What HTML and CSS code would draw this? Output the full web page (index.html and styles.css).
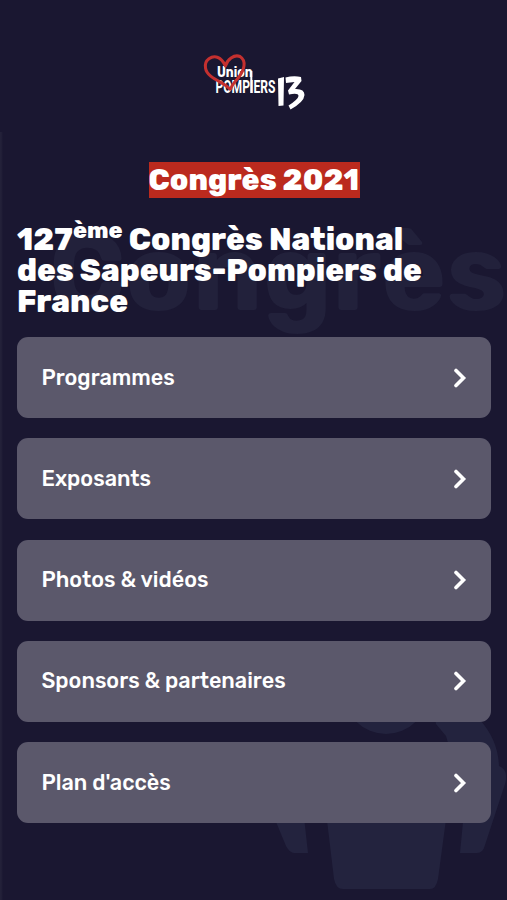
FILE: index.html
```html
<!DOCTYPE html>
<html lang="fr">

<head>
    <meta charset="UTF-8" />
    <meta name="viewport" content="width=device-width, initial-scale=1" />
    <title>Congrès 2021 – Union Pompiers 13</title>
    <link rel="stylesheet" href="styles.css">
</head>

<body>
    <header class="header">
        <svg class="logo" viewBox="0 0 104 60" role="img" aria-label="Union Pompiers 13">
            <text class="logo-union" x="15" y="26" textLength="35.500" lengthAdjust="spacingAndGlyphs">Union</text>
            <text class="logo-pompiers" transform="translate(13.500 42.200) scale(1 1.600)" textLength="60" lengthAdjust="spacingAndGlyphs">POMPIERS</text>
            <path class="logo-bar" d="M49.300 20v22" />
            <path class="logo-heart" d="M28.500 39C25 32 5 28 3.500 17C2 9 10 4 16 6.500C20 8 22 12 23.500 15C25 9 32 3 38 5.500C45 10 42 19 37 26C33 31 29 34 28.500 39" />
            <path class="logo-13" d="M76 27.500l6-1.500l-.5 28.500l-5 .5zM83.500 26.500q8-2 15.500-.5l.5 4l-6.500 8q9.500-.5 9.500 6q-.5 7-14 14.500l-2-4q9.500-6 10-9.500q0-3.500-9.500-1.500l-1-4l6.500-8.500l-8.500 1z" />
        </svg>
    </header>

    <main class="page">
        <span class="ghost" aria-hidden="true">Congrès</span>
        <svg class="firefighter" viewBox="0 0 240 230" aria-hidden="true">
            <circle cx="120" cy="30" r="42" />
            <path d="M170 62q-4-20 12-30h12q10 16 20 26q18 20 19 46q10 4 6 18l-20 61q-2 8-8 8h-17l5-52l-19-65z" />
            <path d="M60 150H181L172 217q-2 10-8 10H77q-7 0-9-10z" />
            <path d="M8 155l12 29q4 7 8 7h14l-4-36z" />
        </svg>

        <p class="badge-row"><span class="badge">Congrès 2021</span></p>
        <h1 class="title">
            <span class="line">127<sup>ème</sup> Congrès National</span>
            <span class="line">des Sapeurs-Pompiers de</span>
            <span class="line">France</span>
        </h1>

        <nav class="menu">
            <a class="item" href="#">
                <span class="label">Programmes</span>
                <svg class="chevron" viewBox="0 0 14 20"><path d="M3 2.500L10.500 10L3 17.500" /></svg>
            </a>
            <a class="item" href="#">
                <span class="label">Exposants</span>
                <svg class="chevron" viewBox="0 0 14 20"><path d="M3 2.500L10.500 10L3 17.500" /></svg>
            </a>
            <a class="item" href="#">
                <span class="label">Photos &amp; vidéos</span>
                <svg class="chevron" viewBox="0 0 14 20"><path d="M3 2.500L10.500 10L3 17.500" /></svg>
            </a>
            <a class="item" href="#">
                <span class="label">Sponsors &amp; partenaires</span>
                <svg class="chevron" viewBox="0 0 14 20"><path d="M3 2.500L10.500 10L3 17.500" /></svg>
            </a>
            <a class="item" href="#">
                <span class="label">Plan d'accès</span>
                <svg class="chevron" viewBox="0 0 14 20"><path d="M3 2.500L10.500 10L3 17.500" /></svg>
            </a>
        </nav>
    </main>
</body>

</html>
```
FILE: styles.css
```css
* {
    box-sizing: border-box;
}

body {
    margin: 0;
    height: 900px;
    overflow: hidden;
    background: #1a1731;
    color: #fff;
    font-family: Rubik, Inter, sans-serif;
}

.header {
    display: flex;
    justify-content: center;
    height: 132px;
    padding-top: 51px;
}

.logo {
    width: 104px;
    height: 60px;
}

.logo text {
    fill: #fff;
}

.logo-union {
    font: 700 14px Rubik, Inter, sans-serif;
}

.logo-pompiers {
    font: 700 12px Roboto, sans-serif;
}

.logo-bar {
    stroke: #fff;
    stroke-width: 2;
}

.logo-heart {
    fill: none;
    stroke: #c4302f;
    stroke-width: 3;
    stroke-linejoin: round;
}

.logo-13 {
    fill: #fff;
}

.page {
    position: relative;
    height: 768px;
    padding: 29.5px 16px 0 17px;
    background: linear-gradient(90deg, #232139 1px, transparent 3px);
}

/* décor de fond, derrière le contenu */
.ghost {
    position: absolute;
    top: 71px;
    left: 48.5px;
    font-size: 109.5px;
    line-height: 140px;
    font-weight: 700;
    color: #22213b;
}

.firefighter {
    position: absolute;
    top: 530px;
    left: 266px;
    width: 240px;
    height: 230px;
    fill: #23233e;
}

.badge-row {
    display: flex;
    justify-content: center;
    margin: 0 0 26px;
}

.badge {
    position: relative;
    width: 211px;
    height: 36.5px;
    background: #bb2a1e;
    font-size: 29.7px;
    line-height: 36.5px;
    font-weight: 800;
    white-space: nowrap;
}

.title {
    position: relative;
    height: 113px;
    margin: 0;
    font-size: 31px;
    line-height: 31px;
    font-weight: 800;
}

.line {
    display: block;
    white-space: nowrap;
}

.title sup {
    position: relative;
    top: -12px;
    font-size: 23.2px;
    line-height: 0;
    vertical-align: baseline;
}

.menu {
    position: relative;
    display: grid;
    gap: 20.25px;
}

.item {
    display: flex;
    align-items: center;
    justify-content: space-between;
    height: 81px;
    padding: 0 24px 0 24.5px;
    border-radius: 11px;
    background: #5b586b;
    color: #fff;
    font-size: 21.6px;
    font-weight: 500;
    text-decoration: none;
}

.label {
    padding-bottom: 1px;
}

.chevron {
    width: 14px;
    height: 20px;
    fill: none;
    stroke: #fff;
    stroke-width: 3.6;
    stroke-linecap: round;
}
```
